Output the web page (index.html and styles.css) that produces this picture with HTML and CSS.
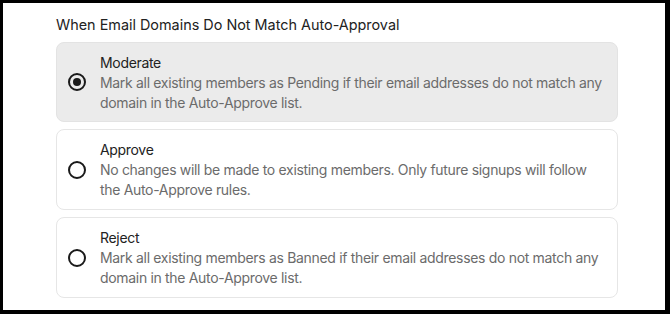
FILE: index.html
```html
<!DOCTYPE html>
<html>
<head>
<meta charset="utf-8">
<link rel="stylesheet" href="styles.css">
</head>
<body>
<div class="frame">
  <h2 class="heading">When Email Domains Do Not Match Auto-Approval</h2>
  <div class="options">
    <label class="option selected">
      <span class="radio checked"></span>
      <span class="text">
        <span class="name">Moderate</span>
        <span class="desc">Mark all existing members as Pending if their email addresses do not match any domain in the Auto-Approve list.</span>
      </span>
    </label>
    <label class="option">
      <span class="radio"></span>
      <span class="text">
        <span class="name">Approve</span>
        <span class="desc">No changes will be made to existing members. Only future signups will follow the Auto-Approve rules.</span>
      </span>
    </label>
    <label class="option">
      <span class="radio"></span>
      <span class="text">
        <span class="name">Reject</span>
        <span class="desc">Mark all existing members as Banned if their email addresses do not match any domain in the Auto-Approve list.</span>
      </span>
    </label>
  </div>
</div>
</body>
</html>
```

FILE: styles.css
```css
* { box-sizing: border-box; }
html, body { margin: 0; padding: 0; background: #fff; }
body {
  font-family: Inter, "Noto Sans", sans-serif;
  font-size: 14px;
  color: #222;
}
.frame {
  width: 670px;
  height: 314px;
  border-style: solid;
  border-color: #000;
  border-width: 3px 5px 4px 3px;
  padding: 12px 47px 0 53px;
  overflow: hidden;
}
.heading {
  margin: 0 0 7px;
  font-size: 14.4px;
  font-weight: 400;
  line-height: 20px;
  color: #222;
}
.options {
  display: flex;
  flex-direction: column;
  gap: 7px;
}
.option {
  display: flex;
  align-items: center;
  gap: 14px;
  height: 81px;
  padding: 0 11px;
  border: 1px solid #e6e6e6;
  border-radius: 8px;
  background: #fff;
}
.option.selected {
  height: 80px;
  background: #ebebeb;
  border-color: #e3e3e3;
}
.radio {
  flex: none;
  width: 18px;
  height: 18px;
  border: 2px solid #1a1a1a;
  border-radius: 50%;
  display: flex;
  align-items: center;
  justify-content: center;
}
.radio.checked::after {
  content: "";
  width: 8px;
  height: 8px;
  border-radius: 50%;
  background: #1a1a1a;
}
.text {
  display: flex;
  flex-direction: column;
  font-size: 14px;
  letter-spacing: -0.32px;
  line-height: 20px;
  padding-top: 1px;
}
.name {
  color: #222;
}
.desc {
  color: #6b6b6b;
}
```
